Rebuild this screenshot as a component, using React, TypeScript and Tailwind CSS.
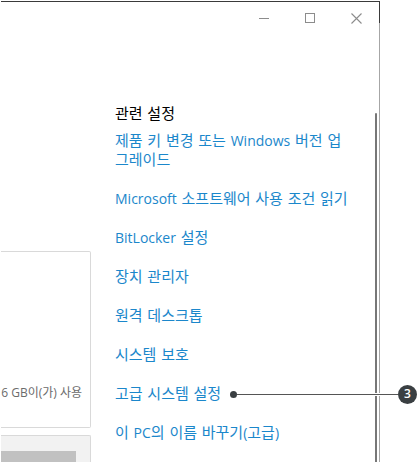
const BEFORE_CALLOUT = [
  '제품 키 변경 또는 Windows 버전 업그레이드',
  'Microsoft 소프트웨어 사용 조건 읽기',
  'BitLocker 설정',
  '장치 관리자',
  '원격 데스크톱',
  '시스템 보호',
];

function WindowControls() {
  const button = 'flex h-8 w-[46px] items-center justify-center text-[#8c8c8c]';
  return (
    <div className="flex justify-end">
      <button type="button" aria-label="최소화" className={button}>
        <svg width="11" height="11" viewBox="0 0 11 11" shapeRendering="crispEdges">
          <path d="M0 5.5h10" stroke="currentColor" />
        </svg>
      </button>
      <button type="button" aria-label="최대화" className={button}>
        <svg width="11" height="11" viewBox="0 0 11 11" shapeRendering="crispEdges">
          <path d="M.5 .5h9v9h-9z" fill="none" stroke="currentColor" />
        </svg>
      </button>
      <button type="button" aria-label="닫기" className={button}>
        <svg width="11" height="11" viewBox="0 0 11 11">
          <path d="M.5 .5l10 10M10.5 .5l-10 10" stroke="currentColor" strokeWidth="1.1" />
        </svg>
      </button>
    </div>
  );
}

// Latin words are set one size down so they sit level with the Hangul
function SettingLink({ label }: { label: string }) {
  return (
    <a href="#" className="text-[#1b87cb] hover:text-gray-500">
      {label.split(/([A-Za-z()]+)/).map((part, i) =>
        i % 2 ? (
          <span key={i} className="font-['Open_Sans',sans-serif] text-[14px] leading-none">
            {part}
          </span>
        ) : (
          part
        ),
      )}
    </a>
  );
}

function Callout({ step }: { step: number }) {
  return (
    <div className="absolute top-0 -right-[62px] left-[115px] flex h-[18px] items-center">
      <span className="size-[7px] rounded-full bg-[#3a3f42]" />
      <span className="h-[3px] flex-1 border-y border-white bg-[#555]" />
      <span className="flex size-[19px] shrink-0 items-center justify-center rounded-full bg-[#3a3f42] font-['Open_Sans',sans-serif] text-[12px] leading-none font-semibold text-white">
        {step}
      </span>
    </div>
  );
}

function StorageCards() {
  return (
    <div className="flex w-[90px] flex-col gap-[7px] pt-[217px]">
      <div className="flex h-[177px] items-end justify-end overflow-hidden rounded-r-xs border border-l-0 border-[#d9d9d9] pr-2 pb-6">
        <p className="font-['Open_Sans','Noto_Sans_CJK_KR',sans-serif] text-[12px] leading-5 whitespace-nowrap text-[#6b6b6b]">
          6 GB이(가) 사용
        </p>
      </div>
      <div className="flex-1 rounded-tr-xs border-t border-r border-[#d9d9d9] bg-[#f2f2f2] pt-[15px] pr-[14px]">
        <div className="h-full bg-[#c1c1c1]" />
      </div>
    </div>
  );
}

export default function App() {
  return (
    <div className="flex min-h-screen overflow-hidden bg-white pt-px pr-[38px] pl-px font-['DejaVu_Sans','Noto_Sans_CJK_KR',sans-serif]">
      <div className="flex flex-1 flex-col border-t border-[#3a3a3a]">
        <div className="flex flex-1">
          <main className="flex min-w-0 flex-1 flex-col">
            <WindowControls />
            <div className="flex flex-1">
              <StorageCards />
              <aside className="ml-6 flex-1 pt-[71px] pb-5">
                <h2 className="text-[15px] leading-[19px] text-black">관련 설정</h2>
                <ul className="mt-2 mr-5 flex flex-col gap-5 text-[15px] leading-[19px]">
                  {BEFORE_CALLOUT.map((label) => (
                    <li key={label} className="pr-1.5">
                      <SettingLink label={label} />
                    </li>
                  ))}
                  <li className="relative">
                    <SettingLink label="고급 시스템 설정" />
                    <Callout step={3} />
                  </li>
                  <li>
                    <SettingLink label="이 PC의 이름 바꾸기(고급)" />
                  </li>
                </ul>
              </aside>
              <div className="mt-[79px] mr-[2px] w-[2px] rounded-t-full bg-[#777]" />
            </div>
          </main>
          <div className="flex w-px flex-col">
            <span className="h-[21px] bg-[#3a3a3a]" />
            <span className="flex-1 bg-[#a6a6a6]" />
          </div>
        </div>
      </div>
    </div>
  );
}
